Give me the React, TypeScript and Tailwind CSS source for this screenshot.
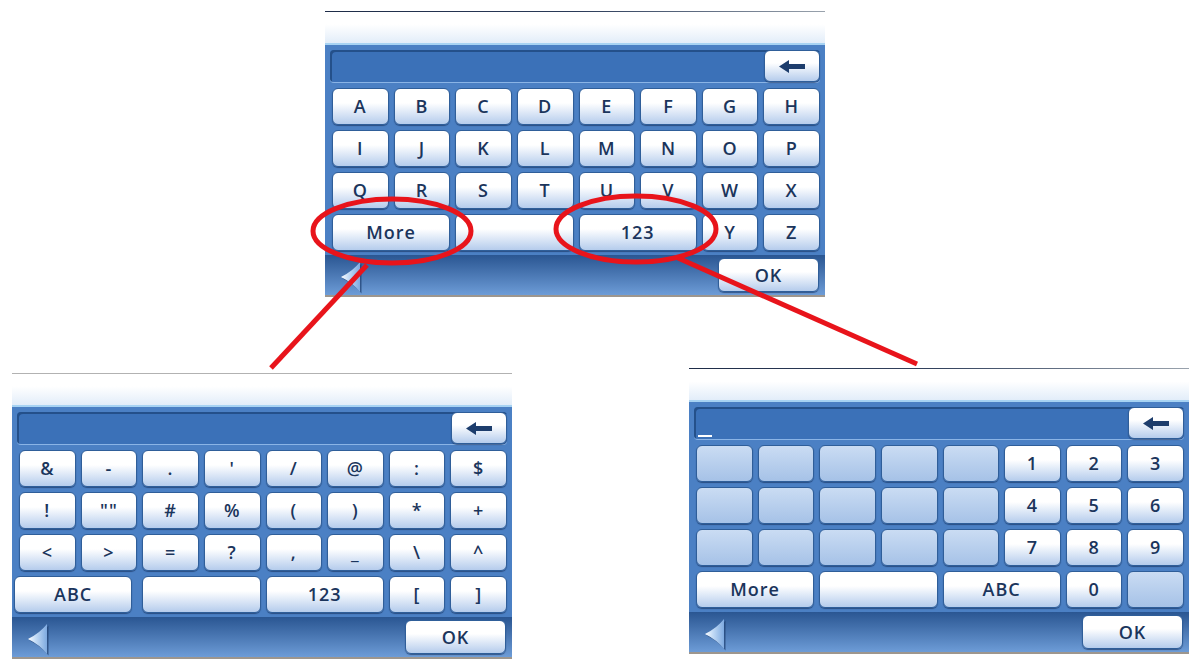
import type { ReactNode } from 'react';

type KeySpec = { label?: ReactNode; span?: 2; kind?: 'white' | 'off'; shift?: boolean };

const keyText = "font-['Open_Sans',sans-serif] text-[18px] font-semibold tracking-[1px] text-[#1b355c]";
const keyEdge = 'rounded-[6px] border border-[#2f5e99] shadow-[0_1px_1px_rgba(20,45,90,0.6)]';
const whiteFace = 'bg-linear-to-b from-white from-40% to-[#b5ccec]';
const offFace = 'bg-linear-to-b from-[#cadcf3] to-[#a6c2e7]';

const letters = (s: string): KeySpec[] => s.split('').map((l) => ({ label: l }));
const off = (n: number): KeySpec[] => Array.from({ length: n }, () => ({ kind: 'off' as const }));

const alphaKeys: KeySpec[] = [
  ...letters('ABCDEFGH'),
  ...letters('IJKLMNOP'),
  ...letters('QRSTUVWX'),
  { label: 'More', span: 2 },
  { span: 2 },
  { label: '123', span: 2 },
  { label: 'Y' },
  { label: 'Z' },
];

const symbolKeys: KeySpec[] = [
  ...['&', '-', '.', "'", '/', '@', ':', '$'].map((l) => ({ label: l })),
  ...['!', '""', '#', '%', '(', ')', '*', '+'].map((l) => ({ label: l })),
  ...['<', '>', '=', '?', ',', '_', '\\', '^'].map((l) => ({ label: l })),
  { label: 'ABC', span: 2, shift: true },
  { span: 2 },
  { label: '123', span: 2 },
  { label: '[' },
  { label: ']' },
];

const numberKeys: KeySpec[] = [
  ...off(5),
  ...letters('123'),
  ...off(5),
  ...letters('456'),
  ...off(5),
  ...letters('789'),
  { label: 'More', span: 2 },
  { span: 2 },
  { label: 'ABC', span: 2 },
  { label: '0' },
  { kind: 'off' },
];

function KeyCap({ k }: { k: KeySpec }) {
  return (
    <div
      className={`flex items-center justify-center ${keyText} ${keyEdge} ${
        k.kind === 'off' ? offFace : whiteFace
      } ${k.span === 2 ? 'col-span-2' : ''} ${k.shift ? 'ml-[-5px] mr-[5px]' : ''}`}
    >
      {k.label}
    </div>
  );
}

function BackArrow() {
  return (
    <svg width="22" height="33" viewBox="0 0 22 33">
      <defs>
        <linearGradient id="tri" x1="0" y1="0" x2="1" y2="0">
          <stop offset="0" stopColor="#ffffff" />
          <stop offset="0.4" stopColor="#c4dcf6" />
          <stop offset="1" stopColor="#7eaae0" />
        </linearGradient>
      </defs>
      <path d="M20 1 Q13 10 1 16 Q13 22 20 31 Z" fill="#1e3f70" transform="translate(1.5 1.5)" opacity="0.7" />
      <path d="M20 1 Q13 10 1 16 Q13 22 20 31 Z" fill="url(#tri)" />
    </svg>
  );
}

function Panel({ keys, line, cursor }: { keys: KeySpec[]; line: string; cursor?: boolean }) {
  return (
    <div className="w-[500px] h-[286px] flex flex-col">
      <div className={`h-[1px] ${line}`} />
      <div className="h-[31px] bg-linear-to-b from-white from-40% to-[#e2edf9]" />
      <div className="h-[2px] bg-[#a7d3f3]" />

      <div className="bg-[#4b80c4] px-[5px] pt-[5px] pb-[4px]">
        <div className="h-[32px] flex rounded-[4px] bg-[#3b71b8] shadow-[inset_2px_2px_0_#24508a,0_1px_0_#8ab4e6]">
          <div className="flex-1 flex items-end pl-[4px] pb-[2px]">
            {cursor && <span className="w-[14px] h-[2px] bg-white" />}
          </div>
          <div className={`w-[56px] flex items-center justify-center ${keyEdge} ${whiteFace}`}>
            <svg width="26" height="13" viewBox="0 0 26 13">
              <path d="M0 6.5 L10 0 L10 4 L26 4 L26 9 L10 9 L10 13 Z" fill="#1d3d6c" />
            </svg>
          </div>
        </div>

        <div className="grid grid-cols-8 auto-rows-[37px] gap-[5px] mt-[6px] ml-[2px]">
          {keys.map((k, i) => (
            <KeyCap key={i} k={k} />
          ))}
        </div>
      </div>

      <div className="flex-1 flex items-start justify-between pl-[15px] pr-[6px] bg-linear-to-b from-[#2a5692] to-[#6d9cd7] border-b-2 border-[#9d968e]">
        <div className="mt-[6px]">
          <BackArrow />
        </div>
        <div className={`mt-[3px] w-[101px] h-[34px] flex items-center justify-center ${keyText} ${keyEdge} ${whiteFace}`}>
          OK
        </div>
      </div>
    </div>
  );
}

export default function App() {
  return (
    <div className="relative w-[1198px] h-[670px] bg-white overflow-hidden">
      <div className="pl-[325px] pt-[11px]">
        <Panel keys={alphaKeys} line="bg-linear-to-r from-[#1e2c48] via-[#2a3a58] to-[#9aa3ad]" />
      </div>

      <div className="flex items-start pl-[12px] mt-[71px] gap-[177px]">
        <div className="mt-[5px]">
          <Panel keys={symbolKeys} line="bg-[#b2b2b2]" />
        </div>
        <Panel keys={numberKeys} line="bg-linear-to-r from-[#1e2c48] via-[#34435e] to-[#9aa3ad]" cursor />
      </div>

      {/* red call-outs */}
      <svg className="absolute inset-0 pointer-events-none" width="1198" height="670" viewBox="0 0 1198 670">
        <g fill="none" stroke="#e8141b" strokeWidth="5">
          <ellipse cx="392" cy="231" rx="79" ry="32" />
          <ellipse cx="636" cy="229" rx="80" ry="33" />
          <line x1="367" y1="265" x2="271" y2="368" />
          <line x1="678" y1="258" x2="917" y2="364" />
        </g>
      </svg>
    </div>
  );
}
